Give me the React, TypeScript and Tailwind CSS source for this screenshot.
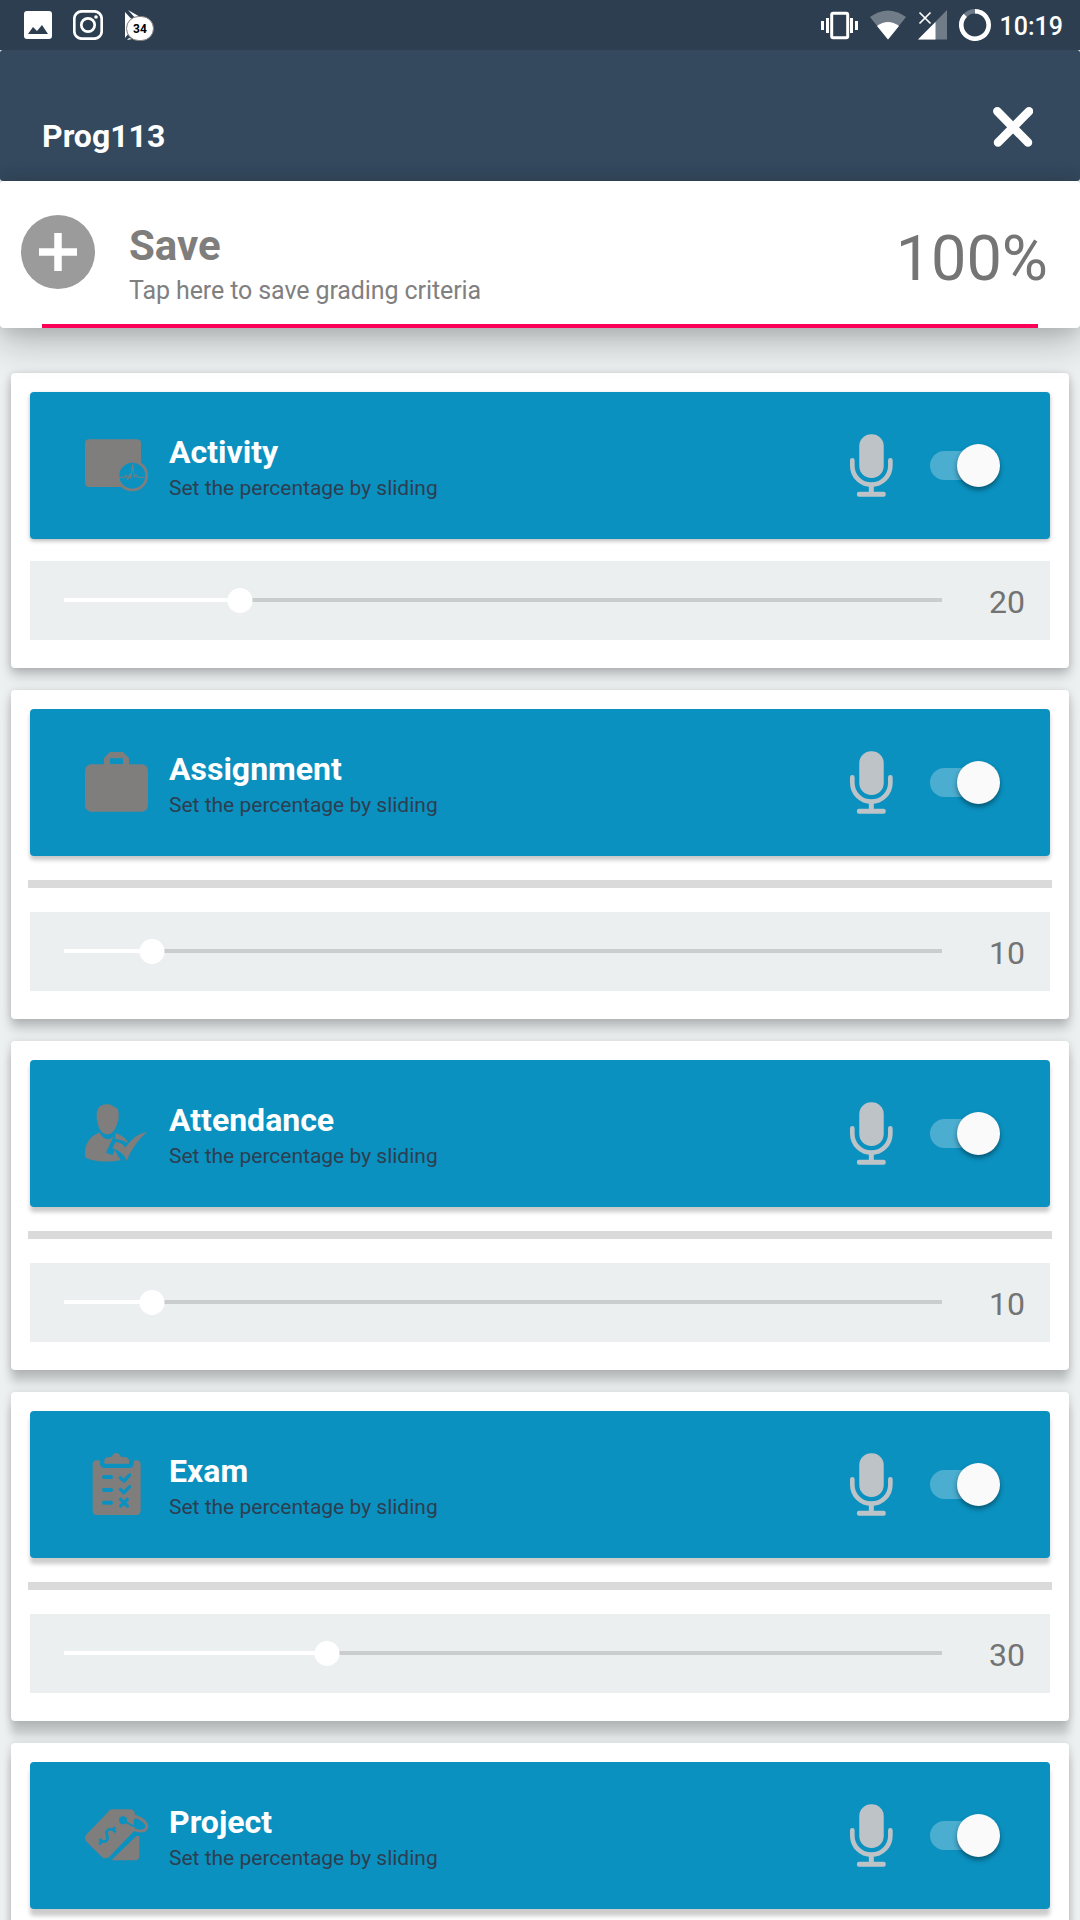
import type { ReactNode } from 'react';

const BLUE = '#0a91c0';
const GRAY = '#807d7d';

function ActivityIcon() {
  return (
    <svg className="h-[63px] w-[63px] overflow-visible" viewBox="255 219 189 189">
      <rect x="255" y="235" width="168" height="143" rx="12" fill={GRAY} />
      <circle cx="397" cy="344" r="43" fill={BLUE} stroke={GRAY} strokeWidth="8" />
      <path d="M357 349h16l5-8 5 15 7-18 2 14 6-41 5 38 5-8 4 8h23" fill="none" stroke={GRAY} strokeWidth="3" />
      <path d="M272 250h50M275 261h36" stroke="#78858a" strokeWidth="2" strokeDasharray="7 6" />
    </svg>
  );
}

function BriefcaseIcon() {
  return (
    <svg className="h-[63px] w-[63px] overflow-visible" viewBox="255 242 189 189">
      <rect x="255" y="282" width="189" height="142" rx="19" fill={GRAY} />
      <path fillRule="evenodd" d="M312 284v-21l18-18h39l18 18v21zM330 264v18h39v-18z" fill={GRAY} />
    </svg>
  );
}

function AttendanceIcon() {
  return (
    <svg className="h-[63px] w-[63px] overflow-visible" viewBox="75 64 189 189" fill={GRAY}>
      <path d="M110 104c0-22 10-32 30-33 11-1 17 2 22 8 12 1 15 12 14 27 0 12-2 17-4 20-4 18-14 35-30 35s-26-16-29-34c-3-8-3-15-3-23z" />
      <path d="M119 155c8 21 32 30 43 9l-24 52 20 7 6-15 18 31c-34 6-82 6-106-9-3-22 1-41 16-58 8-8 18-12 27-17z" />
      <path d="M166 157c15 6 32 13 38 30-13-7-26-11-39-13z" />
      <path d="M167 184c12 1 24 7 29 18 13-21 36-45 66-48-25 19-48 51-62 87-5-16-16-29-43-38z" />
    </svg>
  );
}

function ClipboardIcon() {
  return (
    <svg className="h-[63px] w-[63px] overflow-visible" viewBox="75 66 189 189">
      <path d="M110 88c4 0 9 0 10 3v7c0 8 6 13 13 13h74c9 0 14-5 14-13v-7c2-3 6-3 9-3 8 0 12 5 12 13v138c0 8-5 13-13 13H111c-8 0-13-5-13-13V101c0-8 4-13 12-13z" fill={GRAY} />
      <path d="M133 98v-9c0-7 6-11 13-11h7c5 0 4-12 16-12s11 12 16 12h8c8 0 14 4 14 11v9z" fill={GRAY} />
      <g fill="none" stroke={BLUE} strokeWidth="12" strokeLinecap="round" strokeLinejoin="round">
        <path d="M132 138h21M132 177h21M132 215h21" />
        <path d="M181 140l11 10 17-18M181 175l11 10 17-18M182 205l20 20M202 205l-20 20" strokeWidth="10" />
      </g>
    </svg>
  );
}

function TagIcon() {
  return (
    <svg className="h-[63px] w-[63px] overflow-visible" viewBox="75 71 189 189">
      <path d="M157 87h52c10 0 16 6 16 15v47l-77 80c-7 6-15 7-22 1l-46-46c-7-7-7-15 0-22l62-65c4-6 9-10 15-10z" fill={GRAY} />
      <path d="M229 167h9v60c0 8-5 13-13 13h-71z" fill={GRAY} />
      <circle cx="189" cy="120" r="12" fill={BLUE} />
      <path d="M194 123l27 14V115l11 8c14 7 20 18 16 21-5 5-19 1-31-6z" fill={BLUE} />
      <path d="M192 122l27 15" stroke={BLUE} strokeWidth="6" />
      <path d="M222 107c26 7 41 22 38 34-3 13-21 13-39 7" fill="none" stroke={GRAY} strokeWidth="9" />
      <path d="M166 156c-5-11-19-12-25-4-6 9 7 18 0 27-5 8-17 6-22-3M160 149l5-9M117 186l7 6" fill="none" stroke={BLUE} strokeWidth="8" />
    </svg>
  );
}

function MicIcon() {
  return (
    <svg className="h-[63px] w-[43px] overflow-visible" viewBox="210 222 130 189" fill="#bdc3c7">
      <rect x="238" y="222" width="74" height="132" rx="36" />
      <path d="M217 301v16a57.500 57.500 0 0 0 115 0v-16" fill="none" stroke="#bdc3c7" strokeWidth="14" strokeLinecap="round" />
      <rect x="267" y="376" width="15" height="25" />
      <rect x="231" y="396" width="87" height="15" rx="6" />
    </svg>
  );
}

function Toggle() {
  return (
    <div className="relative h-[29px] w-[70px] rounded-full">
      <div className="h-[29px] w-[60px] rounded-full bg-[#4badd0]" />
      <div className="absolute top-[-7px] left-[27px] h-[42.5px] w-[42.5px] rounded-full bg-[#fafafa] shadow-[0_3px_5px_rgba(0,0,0,0.4)]" />
    </div>
  );
}

function Slider({ value }: { value: number }) {
  return (
    <div className="mx-[19px] flex h-[79px] items-center bg-[#ebeff0] pr-[25px] pl-[34px]">
      <div className="relative -mt-px h-1 w-[878px] bg-[#c9cdce]">
        <div className="h-1 bg-white" style={{ width: `${value}%` }} />
        <div className="absolute top-[-10px] h-[25px] w-[25px] -translate-x-1/2 rounded-full bg-white" style={{ left: `${value}%` }} />
      </div>
      <span className="mt-[3px] ml-auto text-[32px] leading-10 text-[#737373]">{value}</span>
    </div>
  );
}

type CriterionProps = {
  title: string;
  value?: number;
  icon: ReactNode;
  divider?: boolean;
  cardShadow: string;
  bannerShadow: string;
};

function Criterion({ title, value, icon, divider = true, cardShadow, bannerShadow }: CriterionProps) {
  return (
    <section className={`mx-[11px] shrink-0 rounded-[4px] bg-white pt-[19px] pb-7 ${cardShadow}`}>
      <div className={`mx-[19px] flex h-[147px] items-center rounded-[4px] bg-[#0a91c0] pr-[50px] pl-[55px] ${bannerShadow}`}>
        {icon}
        <div className="ml-[21px] flex flex-col pt-[6px]">
          <h2 className="text-[32px] leading-[38px] font-bold text-white">{title}</h2>
          <p className="text-[21px] leading-[34px] text-[#2c3e50]">Set the percentage by sliding</p>
        </div>
        <div className="ml-auto flex items-center gap-[37px]">
          <MicIcon />
          <Toggle />
        </div>
      </div>
      {divider ? <div className="mx-[17px] my-6 h-2 bg-[#dadada]" /> : <div className="h-[22px]" />}
      {value !== undefined && <Slider value={value} />}
    </section>
  );
}

function StatusBar() {
  return (
    <div className="flex h-[50px] shrink-0 items-center bg-[#2d3e50] pr-[17px] pl-6">
      <svg className="h-7 w-7" viewBox="0 0 28 28">
        <rect width="28" height="28" rx="3" fill="#fff" />
        <path d="M4 23l5-7 4 4 5-6 6 9z" fill="#2d3e50" />
      </svg>
      <svg className="ml-[21px] h-[30px] w-[30px]" viewBox="0 0 30 30" fill="none" stroke="#fff">
        <rect x="1.300" y="1.300" width="27.400" height="27.400" rx="7.500" strokeWidth="2.700" />
        <circle cx="15" cy="15" r="6.700" strokeWidth="2.700" />
        <circle cx="23" cy="7" r="1.800" fill="#fff" stroke="none" />
      </svg>
      <div className="relative ml-[22px] h-[31px] w-[29px]">
        <svg className="h-[31px] w-[29px]" viewBox="0 0 29 31">
          <path d="M0 2l11 12L0 28zM3 0l14 8-5 2zM2 30l2-2 3 1z" fill="#fff" />
        </svg>
        <span className="absolute top-[6px] left-[1px] flex h-[25px] w-[28px] items-center justify-center rounded-full border border-[#817b78] bg-white pt-[2px] text-[12px] font-bold text-black">34</span>
      </div>
      <svg className="ml-auto h-[30px] w-[37px]" viewBox="0 0 37 30" fill="#fff">
        <rect x="10.700" y="3.200" width="16" height="24.600" rx="1.500" fill="none" stroke="#fff" strokeWidth="3" />
        <path d="M0 11h3v9H0zM5 8h3v15H5zM29 8h3v15h-3zM34 11h3v9h-3z" />
      </svg>
      <svg className="ml-3 h-[30px] w-9" viewBox="0 0 36 30">
        <path d="M0 7Q18-6 36 7L18 29.500z" fill="#fff" opacity=".32" />
        <path d="M7 16Q18 8 29 16L18 29.500z" fill="#fff" />
      </svg>
      <svg className="ml-3 h-[30px] w-[29px]" viewBox="0 0 29 30">
        <path d="M0 29.500L29 0v29.500z" fill="#fff" opacity=".32" />
        <path d="M0 29.500L17.500 12v17.500z" fill="#fff" />
        <path d="M1.500 2.500l11 11m0-11l-11 11" stroke="#fff" strokeWidth="1.700" />
      </svg>
      <svg className="ml-3 h-8 w-8" viewBox="0 0 32 32" fill="none" strokeWidth="4.500">
        <circle cx="16" cy="16" r="13.700" stroke="#6d7986" />
        <path d="M16 2.300A13.700 13.700 0 1 1 6.300 6.300" stroke="#fff" />
      </svg>
      <span className="ml-[9px] pt-[4px] text-[25px] leading-8 font-medium text-white">10:19</span>
    </div>
  );
}

export default function App() {
  return (
    <main className="flex h-[1920px] w-[1080px] flex-col overflow-hidden bg-[#ecf0f1] font-[Roboto,sans-serif]">
      <StatusBar />
      <header className="flex h-[131px] shrink-0 items-center justify-between rounded-[3px] bg-[#34495e] pr-[47px] pl-[42px]">
        <h1 className="pt-[40px] text-[32px] leading-10 font-bold text-white">Prog113</h1>
        <svg className="mt-[22px] h-10 w-10" viewBox="0 0 40 40" stroke="#fff" strokeWidth="8.500" strokeLinecap="round">
          <path d="M4.300 4.300L35 35.500M36 4.300L5 35.500" />
        </svg>
      </header>
      <section className="relative z-10 h-[147px] shrink-0 rounded-[4px] bg-white shadow-[0_18px_34px_rgba(0,0,0,0.2),0_0_20px_rgba(0,0,0,0.16)]">
        <div className="flex h-[143px] items-start pr-[32px] pl-[21px]">
          <svg className="mt-[34px] h-[74px] w-[74px]" viewBox="0 0 74 74">
            <circle cx="37" cy="37" r="37" fill="#9b9b9b" />
            <path d="M37 18v38M18 37h38" stroke="#fff" strokeWidth="7.500" />
          </svg>
          <div className="mt-[40px] ml-[34px]">
            <h2 className="text-[42px] leading-[50px] font-bold text-[#807d7d]">Save</h2>
            <p className="text-[25px] leading-10 tracking-[-0.1px] text-[#808080]">Tap here to save grading criteria</p>
          </div>
          <span className="mt-[43px] ml-auto text-[63px] leading-[70px] text-[#757575]">100%</span>
        </div>
        <div className="mr-[42px] ml-[42px] h-1 bg-[#fa0057]" />
      </section>
      <div className="mt-[45px] flex flex-col gap-[22px]">
        <Criterion
          title="Activity"
          value={20}
          icon={<ActivityIcon />}
          divider={false}
          cardShadow="shadow-[0_8px_12px_rgba(0,0,0,0.18),0_1px_9px_rgba(0,0,0,0.16)]"
          bannerShadow="shadow-[0_2px_4px_rgba(0,0,0,0.28)]"
        />
        <Criterion
          title="Assignment"
          value={10}
          icon={<BriefcaseIcon />}
          cardShadow="shadow-[0_10px_11px_rgba(0,0,0,0.18),0_1px_9px_rgba(0,0,0,0.15)]"
          bannerShadow="shadow-[0_4px_4px_rgba(0,0,0,0.22)]"
        />
        <Criterion
          title="Attendance"
          value={10}
          icon={<AttendanceIcon />}
          cardShadow="shadow-[0_12px_10px_rgba(0,0,0,0.18),0_1px_9px_rgba(0,0,0,0.15)]"
          bannerShadow="shadow-[0_5px_4px_rgba(0,0,0,0.21)]"
        />
        <Criterion
          title="Exam"
          value={30}
          icon={<ClipboardIcon />}
          cardShadow="shadow-[0_14px_9px_rgba(0,0,0,0.18),0_1px_9px_rgba(0,0,0,0.15)]"
          bannerShadow="shadow-[0_6px_4px_rgba(0,0,0,0.2)]"
        />
        <Criterion
          title="Project"
          icon={<TagIcon />}
          cardShadow="shadow-[0_14px_9px_rgba(0,0,0,0.18),0_1px_9px_rgba(0,0,0,0.15)]"
          bannerShadow="shadow-[0_7px_4px_rgba(0,0,0,0.2)]"
        />
      </div>
    </main>
  );
}
